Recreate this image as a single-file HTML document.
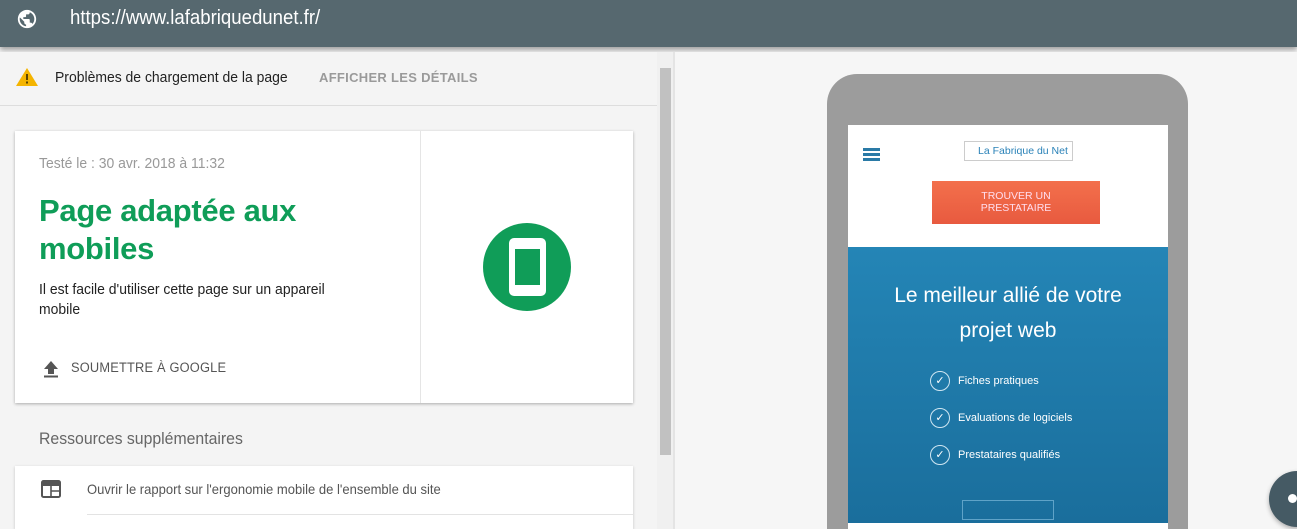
<!DOCTYPE html>
<html style="width:1297px;height:529px;overflow:hidden"><head><meta charset="utf-8"><style>
*{margin:0;padding:0;box-sizing:border-box}
body{width:1297px;height:529px;overflow:hidden;background:#f5f5f5;font-family:"Liberation Sans",sans-serif;position:relative}
.abs{position:absolute}
</style></head><body>
<div class="abs" style="left:0;top:0;width:1297px;height:47px;background:#56686f;box-shadow:0 3px 5px rgba(0,0,0,.35)"></div>
<svg class="abs" style="left:16px;top:8px" width="22" height="22" viewBox="0 0 24 24"><path fill="#fff" d="M12 2C6.48 2 2 6.48 2 12s4.48 10 10 10 10-4.48 10-10S17.52 2 12 2zm-1 17.930c-3.95-.49-7-3.850-7-7.93 0-.62.08-1.21.21-1.79L9 15v1c0 1.1.9 2 2 2v1.93zm6.9-2.540c-.26-.81-1-1.390-1.9-1.39h-1v-3c0-.55-.45-1-1-1H8v-2h2c.55 0 1-.45 1-1V7h2c1.1 0 2-.9 2-2v-.41c2.93 1.19 5 4.06 5 7.41 0 2.08-.8 3.97-2.1 5.39z"/></svg>
<div class="abs" style="left:70px;top:7px;font-size:20px;color:#fff;transform:scaleX(.93);transform-origin:left">https://www.lafabriquedunet.fr/</div>

<div class="abs" style="left:0;top:52px;width:657px;height:477px;background:#f4f4f4"></div>
<svg class="abs" style="left:15px;top:67px" width="24" height="20" viewBox="0 0 24 20"><path fill="#f4b400" d="M12 1L23 19H1z"/><rect x="11" y="7" width="2" height="6" fill="#5a4300"/><rect x="11" y="14.5" width="2" height="2" fill="#5a4300"/></svg>
<div class="abs" style="left:55px;top:69px;font-size:15px;color:#222;transform:scaleX(.93);transform-origin:left">Problèmes de chargement de la page</div>
<div class="abs" style="left:319px;top:70px;font-size:13px;color:#9a9a9a;font-weight:bold;letter-spacing:.3px">AFFICHER LES DÉTAILS</div>
<div class="abs" style="left:0;top:105px;width:657px;height:1px;background:#ddd"></div>

<div class="abs" style="left:15px;top:131px;width:618px;height:272px;background:#fff;box-shadow:0 1px 3px rgba(0,0,0,.3)"></div>
<div class="abs" style="left:420px;top:131px;width:1px;height:272px;background:#e5e5e5"></div>
<div class="abs" style="left:39px;top:155px;font-size:15px;color:#999;transform:scaleX(.93);transform-origin:left">Testé le : 30 avr. 2018 à 11:32</div>
<div class="abs" style="left:39px;top:192px;font-size:31px;line-height:38px;color:#0f9d58;width:330px;font-weight:bold;letter-spacing:-.3px">Page adaptée aux mobiles</div>
<div class="abs" style="left:39px;top:280px;font-size:15px;line-height:20px;color:#222;width:370px;transform:scaleX(.93);transform-origin:left">Il est facile d'utiliser cette page sur un appareil<br>mobile</div>
<svg class="abs" style="left:42px;top:360px" width="18" height="18" viewBox="0 0 18 18"><path fill="#555" d="M9 1L2 9h4v5h6V9h4z"/><rect x="2" y="15.5" width="14" height="2" fill="#555"/></svg>
<div class="abs" style="left:71px;top:360px;font-size:13.5px;color:#555;letter-spacing:.2px;transform:scaleX(.95);transform-origin:left">SOUMETTRE À GOOGLE</div>
<div class="abs" style="left:483px;top:223px;width:88px;height:88px;border-radius:50%;background:#109d58"></div>
<div class="abs" style="left:509px;top:238px;width:37px;height:58px;border-radius:5px;background:#fff"></div>
<div class="abs" style="left:515px;top:249px;width:25px;height:36px;background:#109d58"></div>

<div class="abs" style="left:39px;top:429px;font-size:17px;color:#666;transform:scaleX(.93);transform-origin:left">Ressources supplémentaires</div>
<div class="abs" style="left:15px;top:466px;width:618px;height:63px;background:#fff;box-shadow:0 1px 3px rgba(0,0,0,.2)"></div>
<svg class="abs" style="left:41px;top:480px" width="20" height="18" viewBox="0 0 20 18"><rect x="1" y="1" width="18" height="16" rx="1.5" fill="none" stroke="#555" stroke-width="2"/><rect x="1" y="1" width="18" height="5" fill="#555"/><path d="M10 6v11M10 11h9" stroke="#555" stroke-width="1.6"/></svg>
<div class="abs" style="left:87px;top:481px;font-size:14px;color:#555;transform:scaleX(.93);transform-origin:left">Ouvrir le rapport sur l'ergonomie mobile de l'ensemble du site</div>
<div class="abs" style="left:87px;top:514px;width:546px;height:1px;background:#e3e3e3"></div>

<div class="abs" style="left:657px;top:52px;width:16px;height:477px;background:#f0f0f0"></div>
<div class="abs" style="left:660px;top:68px;width:11px;height:387px;background:#c1c1c1"></div>
<div class="abs" style="left:673px;top:52px;width:2px;height:477px;background:#e4e4e4"></div>

<div class="abs" style="left:675px;top:52px;width:622px;height:477px;background:#f6f6f6"></div>
<div class="abs" style="left:827px;top:74px;width:361px;height:455px;border-radius:30px 30px 0 0;background:#9c9c9c"></div>
<div class="abs" style="left:848px;top:125px;width:320px;height:122px;background:#fff"></div>
<div class="abs" style="left:863px;top:148px;width:17px;height:3px;background:#2a7aa6;box-shadow:0 5px 0 #2a7aa6,0 10px 0 #2a7aa6"></div>
<div class="abs" style="left:964px;top:141px;width:109px;height:20px;border:1px solid #ccc;font-size:10.5px;color:#2a82b8;line-height:18px;padding-left:13px">La Fabrique du Net</div>
<div class="abs" style="left:932px;top:181px;width:168px;height:43px;background:linear-gradient(#f3704c,#e85a3f);color:#fde;font-size:10.5px;text-align:center;line-height:12px;padding-top:9px">TROUVER UN<br>PRESTATAIRE</div>
<div class="abs" style="left:848px;top:247px;width:320px;height:276px;background:linear-gradient(#2485b6,#1a6e9c)"></div>
<div class="abs" style="left:848px;top:278px;width:320px;text-align:center;font-size:21px;line-height:35px;color:#fff">Le meilleur allié de votre<br>projet web</div>
<div class="abs" style="left:930px;top:371px;color:#fff;font-size:11px">
<div style="height:37px;display:flex;gap:8px"><span style="width:20px;height:20px;border:1px solid #cfe6f2;border-radius:50%;display:inline-block;text-align:center;line-height:18px;font-size:11px">✓</span><span style="padding-top:4px">Fiches pratiques</span></div>
<div style="height:37px;display:flex;gap:8px"><span style="width:20px;height:20px;border:1px solid #cfe6f2;border-radius:50%;display:inline-block;text-align:center;line-height:18px;font-size:11px">✓</span><span style="padding-top:4px">Evaluations de logiciels</span></div>
<div style="height:37px;display:flex;gap:8px"><span style="width:20px;height:20px;border:1px solid #cfe6f2;border-radius:50%;display:inline-block;text-align:center;line-height:18px;font-size:11px">✓</span><span style="padding-top:4px">Prestataires qualifiés</span></div>
</div>
<div class="abs" style="left:962px;top:500px;width:92px;height:20px;border:1px solid #5fa3c8"></div>
<div class="abs" style="left:848px;top:523px;width:320px;height:6px;background:#fff"></div>
<div class="abs" style="left:1269px;top:471px;width:56px;height:56px;border-radius:50%;background:#455a64;box-shadow:0 2px 5px rgba(0,0,0,.3)"></div>
<div class="abs" style="left:1288px;top:494px;width:9px;height:9px;border-radius:50%;background:#fff"></div>
</body></html>
